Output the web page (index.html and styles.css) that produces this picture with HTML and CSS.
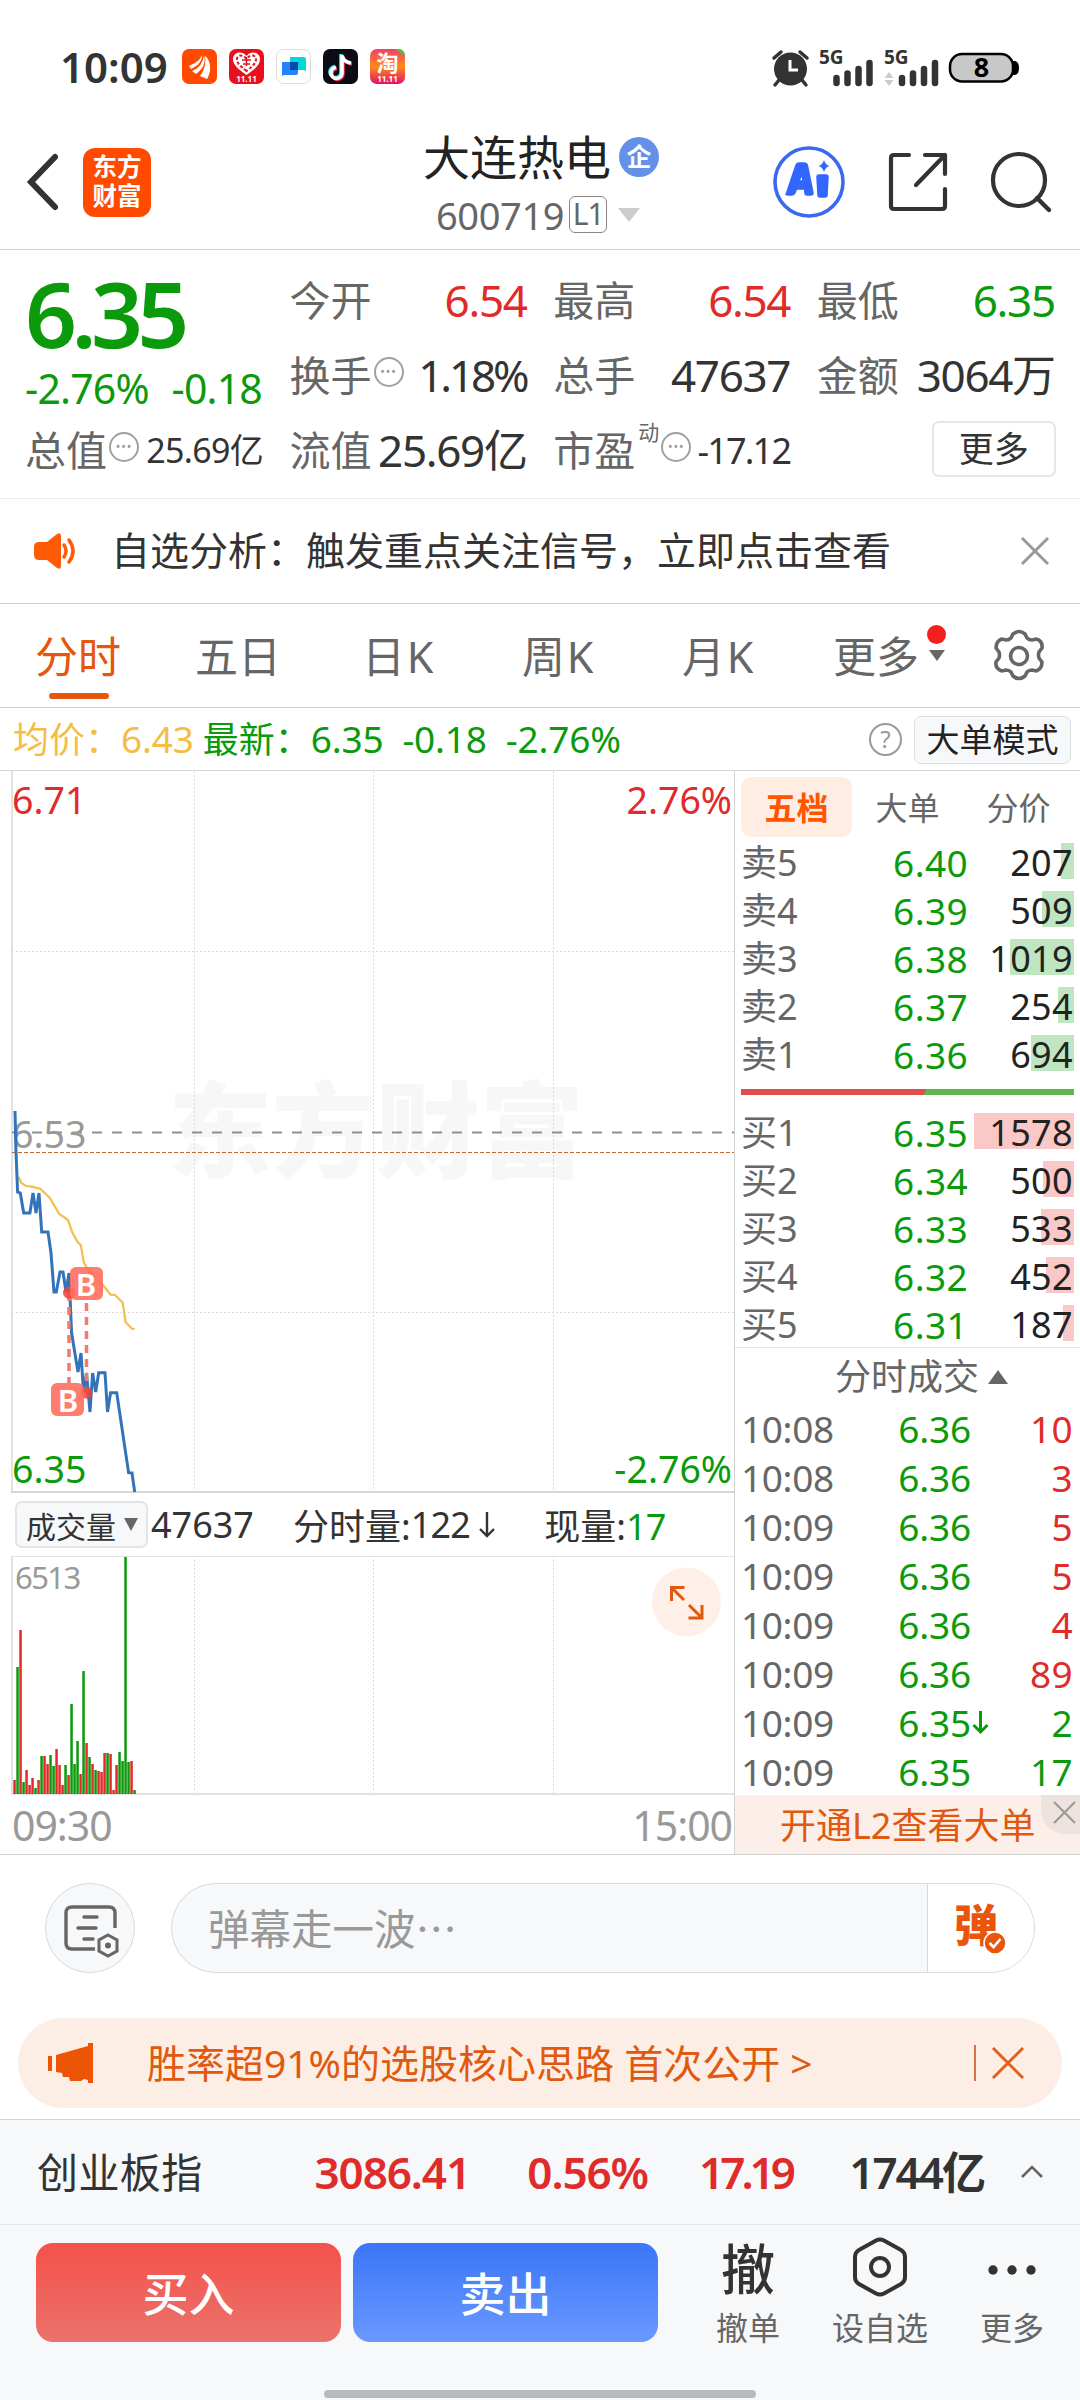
FILE: index.html
```html
<!DOCTYPE html>
<html lang="zh-CN">
<head>
  <meta charset="UTF-8">
  <title>大连热电 600719</title>
  <link rel="stylesheet" href="styles.css">
</head>
<body>
  <!-- Status bar -->
  <div class="statusbar">
    <span class="clock">10:09</span>
    <div class="apps">
      <svg width="35" height="35" viewBox="0 0 35 35"><rect width="35" height="35" rx="7" fill="#ff4a00"/><path d="M7 17C14 14 18 11 20 6c0 6-3 10-11 14zM10 22c8-3 11-9 12-16 2 8-1 14-8 19zM18 27c5-7 6-13 5-20 6 4 7 15 2 23z" fill="#fff"/></svg>
      <svg width="35" height="35" viewBox="0 0 35 35"><rect width="35" height="35" rx="7" fill="#e8101c"/><path d="M17.500 26C9 20 4 16 4 10c0-7 9-9 13.500-3C22 1 31 3 31 10c0 6-5 10-13.500 16z" fill="#fff"/><path d="M17.500 22C11 17 8 14 8 10c0-4 6-5 9.500 0C21 5 27 6 27 10c0 4-3 7-9.500 12z" fill="none" stroke="#e8101c" stroke-width="2" stroke-dasharray="3 2"/><path d="M13 11h9M17.500 8v9M14 15h7" stroke="#e8101c" stroke-width="1.500"/><text x="17.500" y="33" class="app-tag">11.11</text></svg>
      <svg width="35" height="35" viewBox="0 0 35 35"><rect x=".5" y=".5" width="34" height="34" rx="7" fill="#fff" stroke="#ddd"/><path d="M14 8h14q2 0 2 2v12l-3-1H14z" fill="#05d8dc"/><path d="M6 13h16v11q0 2-2 2H8l-2 1z" fill="#2384fa"/><path d="M14 13h8v8h-8z" fill="#0a4aa8"/></svg>
      <svg width="35" height="35" viewBox="0 0 35 35"><rect width="35" height="35" rx="7" fill="#0b0a16"/><g fill="none" stroke-width="3.600"><path d="M18 5v18a5.500 5.500 0 1 1-6-5.500M18 7q2 6 9 7" stroke="#25f4ee"/><path d="M20 7v18a5.500 5.500 0 1 1-6-5.500M20 8q2 6 9 7" stroke="#fe2c55"/><path d="M19 6v18a5.500 5.500 0 1 1-6-5.500M19 7q2 6 9 7" stroke="#fff"/></g></svg>
      <svg width="35" height="35" viewBox="0 0 35 35"><defs><linearGradient id="tb" x2="0" y2="1"><stop stop-color="#f0406a"/><stop offset=".5" stop-color="#ff8a1c"/><stop offset="1" stop-color="#e0106a"/></linearGradient></defs><rect width="35" height="35" rx="7" fill="url(#tb)"/><path d="M25 0h4q6 1 6 7z" fill="#4fc13a"/><text x="17.500" y="22" class="app-tao">淘</text><text x="17.500" y="33" class="app-tag">11.11</text></svg>
    </div>
    <div class="signals">
      <svg width="38" height="38" viewBox="0 0 38 38"><circle cx="18.500" cy="20" r="16.500" fill="#333"/><path d="M2 9l7-6M28 3l7 6M7 31l-4 5M30 31l4 5" stroke="#333" stroke-width="3.500" stroke-linecap="round"/><path d="M18 11v10h8" fill="none" stroke="#fff" stroke-width="3"/></svg>
      <svg class="sim" width="55" height="38" viewBox="0 0 55 38"><text x="0" y="14.500" class="net">5G</text><path d="M17.500 29v5M28.500 24.500v9.500M39.500 20v14M50.500 14v20" stroke="#333" stroke-width="6.500" stroke-linecap="round"/></svg>
      <svg class="sim2" width="57" height="38" viewBox="0 0 57 38"><text x="0" y="14.500" class="net">5G</text><path d="M.5 29l4.500-6 4.500 6zM.5 31h9l-4.500 6z" fill="#ccc"/><path d="M18 29v5M29 24.500v9.500M40 20v14M51 14v20" stroke="#333" stroke-width="6.500" stroke-linecap="round"/></svg>
      <svg class="battery" width="70" height="32" viewBox="0 0 70 32"><rect x="1" y="2" width="63" height="27.500" rx="12" fill="#c8c8c8" stroke="#000" stroke-width="2.500"/><path d="M63 9h3q4 1 4 7t-4 7h-3z"/><text x="32.500" y="25" class="level">8</text></svg>
    </div>
  </div>

  <!-- Title bar -->
  <header class="header">
    <svg class="back" width="36" height="60" viewBox="0 0 36 60"><path d="M31 5L7 30l24 25" fill="none" stroke="#333" stroke-width="6" stroke-linecap="round"/></svg>
    <div class="logo">东方<br>财富</div>
    <div class="stock">
      <div class="stock-name">大连热电<span class="qi">企</span></div>
      <div class="stock-code"><span>600719</span><span class="l1">L1</span><i class="tri-down"></i></div>
    </div>
    <div class="actions">
      <svg width="72" height="74" viewBox="0 0 72 74"><circle cx="36" cy="37" r="34" fill="none" stroke="#3a68f0" stroke-width="3.600"/><path d="M13 50L23 20q1-2 3-2h5q3 0 3.500 3L40 48q0 2-2 2h-4q-2 0-2-2l-.5-4h-8l-1.500 4q-1 2-3 2h-4q-2 0-2-1zM26 36h4l-1-7zM46 30h7q2 0 2 2l-1 18q0 2-2 2h-5q-2 0-2-2l-1-18q0-2 2-2z" fill="#3366ff" stroke="#3366ff" stroke-width="1.500"/><path d="M51 15q1.500 5 5.500 6-4 1-5.500 6-1.500-5-5.500-6 4-1 5.500-6z" fill="#3366ff"/></svg>
      <svg width="60" height="62" viewBox="0 0 60 62"><path d="M21 4H6q-3 0-3 3v48q0 3 3 3h48q3 0 3-3V38M57 23V4H37M57 4L28 34" fill="none" stroke="#333" stroke-width="4.200" stroke-linecap="round" stroke-linejoin="round"/></svg>
      <svg width="60" height="62" viewBox="0 0 60 62"><circle cx="28" cy="29" r="26" fill="none" stroke="#333" stroke-width="4.200"/><path d="M46 47l12 12" stroke="#333" stroke-width="4.400" stroke-linecap="round"/></svg>
    </div>
  </header>

  <!-- Quote summary -->
  <section class="quote">
    <div class="price">
      <div class="price-now">6.35</div>
      <div class="price-chg n"><span>-2.76%</span><span>-0.18</span></div>
    </div>
    <div class="cell"><span>今开</span><b class="red">6.54</b></div>
    <div class="cell"><span>最高</span><b class="red">6.54</b></div>
    <div class="cell"><span>最低</span><b class="green">6.35</b></div>
    <div class="cell"><span>换手</span><i class="dots">•••</i><b class="tight">1.18%</b></div>
    <div class="cell"><span>总手</span><b>47637</b></div>
    <div class="cell"><span>金额</span><b>3064万</b></div>
    <div class="cell"><span>总值</span><i class="dots">•••</i><b class="small">25.69亿</b></div>
    <div class="cell"><span>流值</span><b>25.69亿</b></div>
    <div class="cell"><span>市盈</span><sup>动</sup><i class="dots">•••</i><b class="mid">-17.12</b></div>
    <div class="cell"><button class="more-btn">更多</button></div>
  </section>

  <!-- Notice -->
  <div class="notice">
    <svg width="46" height="38" viewBox="0 0 46 38"><path d="M6 10h8L24 2q4-2 4 2v30q0 4-4 2l-10-8H6q-5 0-5-5v-8q0-5 5-5z" fill="#ff5a05"/><path d="M31 13q4 6 0 12M36 8q8 11 0 22" fill="none" stroke="#ff5a05" stroke-width="3.500" stroke-linecap="round"/></svg>
    <span>自选分析：触发重点关注信号，立即点击查看</span>
    <svg class="close" width="30" height="30" viewBox="0 0 30 30"><path d="M2 2l26 26M28 2L2 28" stroke="#999" stroke-width="3"/></svg>
  </div>

  <!-- Chart tabs -->
  <nav class="tabs">
    <a class="active">分时</a>
    <a class="wide">五日</a>
    <a class="k">日K</a>
    <a class="k">周K</a>
    <a class="k">月K</a>
    <a class="tab-more">更多<i class="dot"></i><i class="caret"></i></a>
    <svg width="52" height="54" viewBox="0 0 52 54"><path d="M20 5q6-5 12 0l2 4q2 2 5 2l4-1q7 2 6 9l-3 4q-1 3 0 6l3 4q0 7-6 9l-4-1q-3 0-5 2l-2 4q-6 5-12 0l-2-4q-2-2-5-2l-4 1q-7-2-6-9l3-4q1-3 0-6l-3-4q0-7 6-9l4 1q3 0 5-2z" fill="none" stroke="#666" stroke-width="3.600"/><circle cx="26" cy="27" r="8.500" fill="none" stroke="#666" stroke-width="3.600"/></svg>
  </nav>

  <div class="infobar">
    <span class="avg">均价：<b>6.43</b></span>
    <span class="latest">最新：<b>6.35</b><b>-0.18</b><b>-2.76%</b></span>
    <span class="help">?</span>
    <button class="mode-btn">大单模式</button>
  </div>

  <main class="main">
    <div class="charts">
      <svg class="price-chart" width="734" height="722" viewBox="0 771 734 722">
        <text x="376" y="1170" class="watermark">东方财富</text>
        <g stroke="#dcdcdc" stroke-width="1" stroke-dasharray="2 2">
          <path d="M194.500 771v721M373.500 771v721M553.500 771v721"/>
          <path d="M12 951.500h722M12 1312.500h722"/>
        </g>
        <path d="M12 771v721" stroke="#e2e2e2" stroke-width="2"/>
        <path d="M11 1492h723" stroke="#d6d6d6" stroke-width="2"/>
        <path d="M12 1132.500h722" stroke="#8f8f8f" stroke-width="2.200" stroke-dasharray="10 10"/>
        <path d="M12 1152.500h722" stroke="#c06a30" stroke-width="1" stroke-dasharray="4 2"/>
        <polyline fill="none" stroke="#f2bf4c" stroke-width="2.200" points="18.400,1177 21.400,1183 26,1186 32,1186.700 40.600,1189 49.800,1198 59.300,1214 68,1220 72,1231.700 78,1242.700 80.800,1245 84,1263 90,1273 103,1285 110.600,1294.700 115,1295 122.800,1302.700 125.500,1322 132,1328.700 134.700,1329"/>
        <text x="12" y="1148" class="axis gray">6.53</text>
        <polyline fill="none" stroke="#3373ba" stroke-width="3" points="15,1111 16,1152 17.600,1192 20.300,1193 23.700,1213 29.900,1213 33,1193 36,1213 39,1193 41.700,1232 48,1232 51,1253 54,1292 56.300,1292 60,1272 63,1272 66,1292 69,1273 71.600,1333 78,1372 81,1353 83.500,1392 86.500,1373 90,1412 92.600,1373 95.700,1392 98.700,1372.700 105,1372.700 107.500,1412 110.600,1392.700 116.700,1392.700 128.600,1472.700 132,1473 134.700,1492"/>
        <path d="M69 1293v90M86.500 1303v90" stroke="#f07a6c" stroke-width="3.500" stroke-dasharray="8 6"/>
        <g fill="#f04438" fill-opacity=".85"><circle cx="69" cy="1292.700" r="6"/><circle cx="86.500" cy="1392.700" r="6"/></g>
        <g fill="#ff6e5e" fill-opacity=".9"><rect x="70" y="1267" width="33" height="33" rx="6"/><rect x="51" y="1383" width="33" height="33" rx="6"/></g>
        <text x="86" y="1295.500" class="mark">B</text>
        <text x="68" y="1411.500" class="mark">B</text>
        <text x="12" y="814" class="axis red">6.71</text>
        <text x="732" y="814" class="axis red end">2.76%</text>
        <text x="12" y="1483" class="axis green">6.35</text>
        <text x="732" y="1483" class="axis green end">-2.76%</text>
      </svg>
      <div class="vol-head">
        <button class="vol-btn">成交量<i></i></button>
        <span>47637</span>
        <span class="vol-min">分时量:<b class="n">122</b><svg width="18" height="30" viewBox="0 0 18 30"><path d="M9 2v24M2 19l7 7 7-7" fill="none" stroke="#333" stroke-width="2.400"/></svg></span>
        <span class="vol-now">现量:<b class="n green">17</b></span>
      </div>
      <svg class="vol-chart" width="734" height="239" viewBox="0 1556 734 239">
        <path d="M194.500 1556v238M373.500 1556v238M553.500 1556v238" stroke="#dcdcdc" stroke-width="1" stroke-dasharray="2 2"/>
        <path d="M12 1556.500h722" fill="none" stroke="#e2e2e2" stroke-width="1"/>
        <path d="M12 1556v238M11 1794h723" fill="none" stroke="#e2e2e2" stroke-width="2"/>
        <g id="volBars"></g>
        <text x="15" y="1589" class="vol-max">6513</text>
        <circle cx="686.500" cy="1602" r="34.500" fill="#fef0e9"/>
        <path d="M671.500 1601v-13.500h13M672 1588l12 12M688.500 1618h13.500v-13M689 1605l12.500 12.500" fill="none" stroke="#e0590e" stroke-width="3"/>
      </svg>
      <div class="time-axis"><span>09:30</span><span>15:00</span></div>
    </div>

    <aside class="depth">
      <div class="depth-tabs"><span class="active">五档</span><span>大单</span><span>分价</span></div>
      <div class="book" id="sells"></div>
      <div class="ratio"><i></i></div>
      <div class="book" id="buys"></div>
      <div class="deal-title">分时成交<i></i></div>
      <div class="deals" id="deals"></div>
      <div class="l2">开通L2查看大单
        <span class="l2-close"><svg width="23" height="23" viewBox="0 0 23 23"><path d="M1 1l21 21M22 1L1 22" stroke="#999" stroke-width="2.200"/></svg></span>
      </div>
    </aside>
  </main>

  <!-- Bullet comments -->
  <div class="danmu">
    <div class="danmu-set">
      <svg width="56" height="54" viewBox="0 0 56 54"><path d="M51 24V9q0-6-6-6H8Q2 3 2 9v30q0 6 6 6h23" fill="none" stroke="#666" stroke-width="3.400"/><path d="M20 13h13M14 24h18M20 35h9" stroke="#666" stroke-width="3.400" stroke-linecap="round"/><path d="M44 31l9 5v11l-9 5-9-5V36z" fill="none" stroke="#666" stroke-width="3"/><circle cx="44" cy="41.500" r="3" fill="#666"/></svg>
    </div>
    <div class="danmu-box">
      <span class="danmu-input">弹幕走一波⋯</span>
      <span class="danmu-on">弹<svg width="24" height="24" viewBox="0 0 24 24"><circle cx="12" cy="12" r="11" fill="#e8560c" stroke="#fff" stroke-width="1.500"/><path d="M6.500 12l4 4 7-8" fill="none" stroke="#fff" stroke-width="2.600"/></svg></span>
    </div>
  </div>

  <div class="promo">
    <svg width="46" height="40" viewBox="0 0 46 40"><path d="M0 13h4v15H0zM8 12L40 3V0h5v40h-5v-3l-4-1-3 2H22l-1-4h-6l-1-4-6-1z" fill="#eb5505"/></svg>
    <span class="promo-text">胜率超91%的选股核心思路 首次公开 &gt;</span>
    <i class="promo-line"></i>
    <svg width="34" height="34" viewBox="0 0 34 34"><path d="M2 2l30 30M32 2L2 32" stroke="#e2601a" stroke-width="3"/></svg>
  </div>

  <!-- Bottom bars -->
  <footer class="bottom">
    <div class="index">
      <span class="index-name">创业板指</span>
      <b class="red">3086.41</b>
      <b class="red">0.56%</b>
      <b class="red">17.19</b>
      <b>1744亿</b>
      <svg width="24" height="16" viewBox="0 0 24 16"><path d="M2 13L12 3l10 10" fill="none" stroke="#666" stroke-width="2.600"/></svg>
    </div>
    <div class="trade">
      <button class="buy">买入</button>
      <button class="sell">卖出</button>
      <div class="tool"><div class="tool-icon che">撤</div>撤单</div>
      <div class="tool"><div class="tool-icon"><svg width="56" height="60" viewBox="0 0 56 60"><path d="M24 3.500q4-2 8 0l17 9.500q4 2.500 4 7v20q0 4.500-4 7l-17 9.500q-4 2-8 0L7 47q-4-2.500-4-7V20q0-4.500 4-7z" fill="none" stroke="#333" stroke-width="4"/><circle cx="28" cy="30" r="9" fill="none" stroke="#333" stroke-width="4"/></svg></div>设自选</div>
      <div class="tool"><div class="tool-icon"><svg width="50" height="60" viewBox="0 0 50 60" fill="#333"><circle cx="6" cy="33" r="4.700"/><circle cx="25" cy="33" r="4.700"/><circle cx="44" cy="33" r="4.700"/></svg></div>更多</div>
    </div>
    <div class="home-bar"></div>
  </footer>

  <script>
    // Order book: label, price, volume, bar width
    const sells = [
      ['卖5', '6.40', 207, 13],
      ['卖4', '6.39', 509, 32],
      ['卖3', '6.38', 1019, 64],
      ['卖2', '6.37', 254, 16],
      ['卖1', '6.36', 694, 43]
    ];
    const buys = [
      ['买1', '6.35', 1578, 100],
      ['买2', '6.34', 500, 31],
      ['买3', '6.33', 533, 33],
      ['买4', '6.32', 452, 28],
      ['买5', '6.31', 187, 11]
    ];
    const bookRow = r => `<div class="row"><span>${r[0]}</span><b class="green">${r[1]}</b><em><i style="width:${r[3]}px"></i>${r[2]}</em></div>`;
    document.getElementById('sells').innerHTML = sells.map(bookRow).join('');
    document.getElementById('buys').innerHTML = buys.map(bookRow).join('');

    // Tick list
    const deals = [
      ['10:08', '6.36', 10, 'red'],
      ['10:08', '6.36', 3, 'red'],
      ['10:09', '6.36', 5, 'red'],
      ['10:09', '6.36', 5, 'red'],
      ['10:09', '6.36', 4, 'red'],
      ['10:09', '6.36', 89, 'red'],
      ['10:09', '6.35', 2, 'green', true],
      ['10:09', '6.35', 17, 'green']
    ];
    const arrow = '<svg width="17" height="26" viewBox="0 0 17 26"><path d="M8.500 1v21M1.500 15l7 7 7-7" fill="none" stroke="#0b9a0b" stroke-width="3"/></svg>';
    document.getElementById('deals').innerHTML = deals.map(d =>
      `<div class="row"><span>${d[0]}</span><b class="green">${d[1]}${d[4] ? arrow : ''}</b><em class="${d[3]}">${d[2]}</em></div>`).join('');

    // Volume bars, one per minute
    const vols = 'r14 g127 r164 g12 r24 r9 r16 g6 r14 g38 r38 r30 g39 g28 r45 r29 r9 g29 r19 g90 g30 g53 r20 g123 r51 g37 r30 g24 r23 r22 r41 g41 r40 r4 r29 g42 g33 g237 g32 r33 g4'.split(' ');
    document.getElementById('volBars').innerHTML = vols.map((v, i) => {
      const h = +v.slice(1);
      return `<rect x="${13.3 + i * 3}" y="${1794 - h}" width="2.500" height="${h}" fill="${v[0] === 'r' ? '#e62828' : '#0a9a0a'}"/>`;
    }).join('');
  </script>
</body>
</html>
```
FILE: styles.css
```css
/* Base */
* { box-sizing: border-box; margin: 0; padding: 0; }
body { width: 1080px; height: 2400px; overflow: hidden; background: #fff; color: #333; font-family: "Noto Sans", "Noto Sans CJK SC", sans-serif; }
b, i, em { font-weight: inherit; font-style: normal; }
button { font-family: inherit; color: #333; border: none; background: none; }
svg { display: block; flex: none; overflow: visible; }
.n { letter-spacing: -0.02em; }
.red { color: #e02b2b; fill: #e02b2b; }
.green { color: #0b9a0b; fill: #0b9a0b; }
.gray { fill: #999; }

/* Status bar */
.statusbar { height: 110px; padding: 49px 61px 0 60px; display: flex; align-items: flex-start; }
.clock { width: 122px; line-height: 35px; font-size: 42px; font-weight: 600; }
.apps { display: flex; gap: 12px; }
.app-tag { font-size: 8px; font-weight: 700; fill: #fff; text-anchor: middle; }
.app-tao { font-size: 22px; font-weight: 700; fill: #fff; text-anchor: middle; }
.signals { display: flex; margin-left: auto; }
.sim { margin-left: 9px; }
.sim2 { margin-left: 10px; }
.battery { margin: 3px 0 0 8px; }
.net { font-size: 19px; font-weight: 700; fill: #333; }
.level { font-size: 27px; font-weight: 700; text-anchor: middle; }

/* Header */
.header { height: 140px; border-bottom: 1px solid #d2d2d2; display: flex; padding: 0 29px 0 24px; }
.back { margin-top: 42px; }
.logo { width: 68px; height: 69px; margin: 38px 0 0 23px; padding-top: 4px; border-radius: 12px; background: #ff4a00; color: #fff; font-size: 24.5px; line-height: 29px; font-weight: 700; text-align: center; }
.stock { margin-left: 272px; width: 250px; }
.stock-name { margin-top: 20px; height: 54px; display: flex; align-items: center; font-size: 47px; line-height: 54px; color: #222; }
.qi { width: 40px; height: 40px; margin-left: 8px; border-radius: 50%; background: #6490ea; color: #fff; font-size: 25px; line-height: 38px; font-weight: 700; text-align: center; }
.stock-code { display: flex; align-items: center; height: 50px; padding: 11px 0 0 13px; font-size: 38px; letter-spacing: -0.01em; color: #666; }
.l1 { width: 38px; height: 37px; margin-left: 5px; border: 1.5px solid #888; border-radius: 6px; font-size: 30px; line-height: 33px; text-align: center; letter-spacing: -1px; }
.tri-down { margin-left: 11px; border: 11px solid transparent; border-top: 14px solid #ccc; border-bottom: 0; }
.actions { display: flex; margin: 35px 0 0 auto; gap: 43px; }
.actions svg + svg { margin-top: 6px; }

/* Quote */
.quote { height: 249px; padding: 13px 26px 0 25px; display: grid; grid-template-columns: 237px 236px 236px 237px; grid-template-rows: 75px 75px 75px; column-gap: 27.6px; border-bottom: 1px solid #eee; }
.price { grid-row: span 2; color: #0b9a0b; }
.price-now { height: 100px; margin-top: 2px; font-size: 91px; line-height: 96px; font-weight: 600; letter-spacing: -0.062em; }
.price-chg { display: flex; justify-content: space-between; font-size: 41px; line-height: 46px; }
.cell { display: flex; align-items: center; height: 75px; font-size: 41px; line-height: 75px; color: #333; white-space: nowrap; }
.cell span { flex: none; color: #666; }
.cell b { margin-left: auto; margin-right: -1px; font-size: 44px; letter-spacing: -0.03em; }
.cell b.tight { letter-spacing: -0.07em; }
.cell b.small { font-size: 34px; letter-spacing: -0.02em; }
.cell b.mid { font-size: 36px; letter-spacing: -0.05em; }
.cell sup { flex: none; width: 21px; margin: -38px 0 0 3px; font-size: 21px; color: #666; line-height: 30px; }
.dots { flex: none; width: 30px; height: 30px; margin: -8px 0 0 2px; border: 2.5px solid #a0a0a0; border-radius: 50%; font-size: 12px; line-height: 25px; text-align: center; color: #999; letter-spacing: 1px; }
.more-btn { width: 124px; height: 56px; margin: -3px -2px 0 auto; border: 2px solid #e6e6e6; border-radius: 7px; font-size: 35px; line-height: 50px; }

/* Notice */
.notice { height: 105px; padding: 0 30px 0 33px; display: flex; align-items: center; border-bottom: 1px solid #d2d2d2; font-size: 39px; line-height: 100px; }
.notice span { margin: -2px 0 0 32px; white-space: nowrap; }
.notice .close { margin-left: auto; }

/* Tabs */
.tabs { height: 104px; display: flex; align-items: center; padding: 0 35px; border-bottom: 1px solid #d2d2d2; font-size: 43px; color: #666; }
.tabs a { line-height: 106px; height: 103px; width: 160px; flex: none; white-space: nowrap; }
.tabs a.active { color: #e4570c; position: relative; }
.tabs a.active::after { content: ""; position: absolute; left: 14px; bottom: 8px; width: 60px; height: 6px; border-radius: 3px; background: #e4570c; }
.tabs .wide { width: 167px; }
.tabs .k { letter-spacing: 0.04em; }
.tabs .tab-more { position: relative; width: 120px; margin-left: -9px; }
.dot { position: absolute; left: 94px; top: 21px; width: 19px; height: 19px; border-radius: 50%; background: #f41f1f; }
.caret { position: absolute; left: 96px; top: 46px; border: 8px solid transparent; border-top: 11px solid #666; border-bottom: 0; }
.tabs svg { margin-left: auto; }

/* Info line */
.infobar { height: 63px; padding: 1px 9px 0 13px; display: flex; align-items: center; border-bottom: 1px solid #d6d6d6; font-size: 36px; line-height: 60px; white-space: nowrap; }
.infobar b { font-size: 37px; letter-spacing: -0.005em; }
.avg { color: #f5bd45; }
.latest { margin-left: 9px; color: #0b9a0b; }
.latest b + b { margin-left: 19px; }
.help { width: 33px; height: 33px; margin-left: auto; border: 2.5px solid #999; border-radius: 50%; color: #999; font-size: 24px; line-height: 28px; text-align: center; }
.mode-btn { width: 157px; height: 48px; margin-left: 12px; border: 1.5px solid #dcdee0; border-radius: 7px; background: #f7f8fa; font-size: 33px; line-height: 44px; color: #222; }

/* Charts */
.main { display: flex; height: 1084px; border-bottom: 1px solid #d2d2d2; }
.charts { width: 734px; }
.axis { font-size: 37.5px; }
.end { text-anchor: end; }
.mark { font-size: 31px; font-weight: 600; fill: #fff; text-anchor: middle; }
.watermark { font-size: 104px; font-weight: 900; fill: #f7f7f7; text-anchor: middle; }
.vol-head { height: 63px; display: flex; align-items: center; padding: 0 0 0 15px; font-size: 36px; white-space: nowrap; }
.vol-btn { width: 133px; height: 47px; margin-right: 3px; padding-left: 9px; display: flex; align-items: center; border: 2px solid #e2e4e6; border-radius: 7px; background: #f7f8fa; font-size: 30px; }
.vol-btn i { margin-left: 8px; border: 7.5px solid transparent; border-top: 13px solid #666; border-bottom: 0; }
.vol-min { display: flex; align-items: center; margin-left: 39px; }
.vol-min svg { margin-left: 8px; }
.vol-now { margin-left: 48px; }
.vol-max { font-size: 31px; fill: #999; letter-spacing: -0.05em; }
.time-axis { height: 59px; display: flex; justify-content: space-between; padding: 1px 2px 0 12px; font-size: 41px; line-height: 59px; color: #999; letter-spacing: -0.025em; }

/* Depth panel */
.depth { width: 346px; border-left: 1px solid #d2d2d2; white-space: nowrap; }
.depth-tabs { display: flex; padding: 6px 6px 0; height: 67px; font-size: 32px; line-height: 61px; color: #666; text-align: center; }
.depth-tabs span { width: 111px; height: 60px; }
.depth-tabs .active { background: #ffede4; color: #ff5500; font-weight: 700; border-radius: 10px; }
.row { display: grid; grid-template-columns: 113px 114px 105px; padding-left: 6px; height: 48px; font-size: 36px; line-height: 50px; color: #666; }
.row b { text-align: right; font-size: 37px; letter-spacing: 0.01em; }
.row em { position: relative; text-align: right; color: #222; height: 48px; letter-spacing: 0.01em; }
.row em.red { color: #e02b2b; }
.row em.green { color: #0b9a0b; }
.row em i { position: absolute; right: -1px; top: 5px; height: 36px; background: #bfe6c0; z-index: -1; }
#buys .row em i { background: #fbc8c8; }
.ratio { height: 30px; padding: 11px 6px 0 6px; }
.ratio i { display: block; height: 6px; background: linear-gradient(120deg, #e04b4b 55.2%, #5fb64a 55.200%); }
#buys { height: 240px; border-bottom: 1px solid #e6e6e6; }
.deal-title { height: 57px; display: flex; align-items: center; justify-content: center; font-size: 36px; line-height: 56px; padding: 0 0 0 28px; color: #666; }
.deal-title i { margin-left: 9px; border: 10.5px solid transparent; border-bottom: 14px solid #666; border-top: 0; }
.deals { height: 390px; }
.deals .row { height: 49px; line-height: 48px; font-size: 37px; }
.deals .row span { letter-spacing: -0.01em; }
.deals .row b { position: relative; left: 3px; letter-spacing: -0.005em; }
.deals svg { position: absolute; left: 115px; top: 11px; }
.l2 { position: relative; height: 59px; padding-left: 45px; background: #fcefe9; color: #e0590e; font-size: 36px; line-height: 61px; }
.l2-close { position: absolute; right: 0; top: 0; width: 39px; height: 39px; padding: 6px 0 0 12px; border-bottom-left-radius: 24px; background: #ece3df; }

/* Bullet comments */
.danmu { height: 163px; display: flex; padding: 28px 45px 0; }
.danmu-set { width: 90px; height: 90px; padding: 20px 0 0 18px; border: 1.5px solid #d6d9dd; border-radius: 50%; background: #f7f8fa; }
.danmu-box { display: flex; width: 864px; height: 90px; margin-left: 36px; border: 1.5px solid #d6d9dd; border-radius: 45px; background: #f7f8fa; overflow: hidden; }
.danmu-input { flex: 1; padding-left: 36px; font-size: 41.5px; line-height: 90px; color: #999; }
.danmu-on { position: relative; width: 107px; border-left: 1.5px solid #d6d9dd; background: #fff; padding-left: 26px; font-size: 44px; line-height: 83px; font-weight: 900; color: #e8560c; }
.danmu-on svg { position: absolute; left: 55px; top: 47px; }

/* Promo */
.promo { height: 90px; margin: 0 18px; padding: 0 37px 0 30px; display: flex; align-items: center; border-radius: 45px; background: #fceee5; color: #e0590e; font-size: 39px; line-height: 88px; white-space: nowrap; }
.promo-text { margin-left: 53px; }
.promo-line { width: 2px; height: 36px; margin: 0 15px 0 auto; background: #d9763f; }

/* Bottom */
.bottom { height: 281px; margin-top: 11px; border-top: 1px solid #d2d4d6; background: #f7f8fa; }
.index { height: 105px; display: flex; align-items: center; padding-left: 37px; border-bottom: 1px solid #e4e5e7; font-size: 44px; line-height: 106px; white-space: nowrap; }
.index-name { font-size: 41px; width: 276px; letter-spacing: 0.01em; }
.index b { font-weight: 600; letter-spacing: -0.025em; width: 157px; text-align: right; }
.index b:nth-of-type(2) { width: 178px; }
.index b:nth-of-type(3) { width: 144px; letter-spacing: -0.09em; }
.index b:nth-of-type(4) { width: 192px; margin-right: 36px; letter-spacing: -0.045em; }
.trade { display: flex; padding: 18px 0 0 36px; height: 160px; }
.trade button { width: 305px; height: 99px; margin-right: 12px; border-radius: 17px; color: #fff; font-size: 46px; line-height: 96px; font-weight: 500; }
.buy { background: linear-gradient(#f4514a, #ea736c); }
.sell { background: linear-gradient(#3a76f8, #6b98ff); }
.tool { width: 132px; text-align: center; font-size: 32px; line-height: 54px; color: #666; }
.tool:nth-of-type(1) { margin-left: 12px; }
.tool-icon { height: 66px; margin-top: -8px; padding-bottom: 2px; display: flex; align-items: center; justify-content: center; color: #333; }
.che { font-size: 54px; font-weight: 500; line-height: 60px; padding-top: 4px; }
.home-bar { width: 432px; height: 8px; margin: 5px auto 0; border-radius: 4px; background: #b9babc; }
```
